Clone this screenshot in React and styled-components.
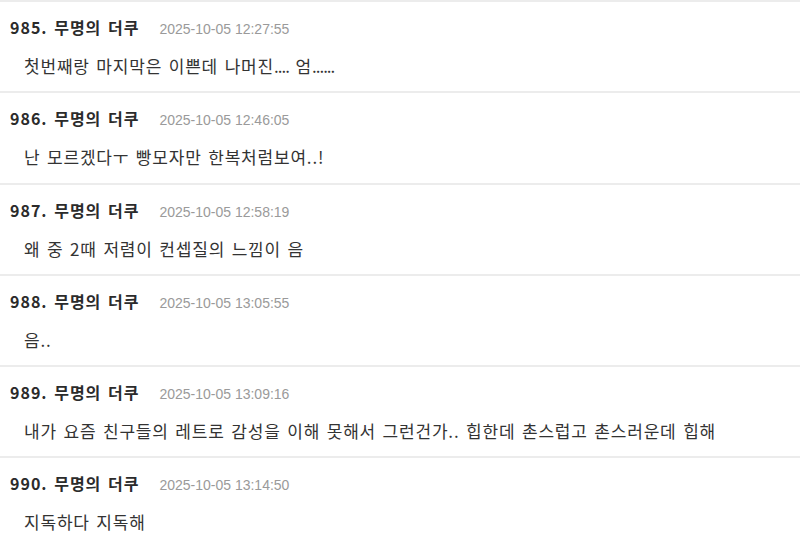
import React from "react";
import styled, { createGlobalStyle } from "styled-components";

const GlobalStyle = createGlobalStyle`
  html, body {
    margin: 0;
    padding: 0;
    background: #ffffff;
  }
  body {
    font-family: "Noto Sans CJK KR", "Noto Sans", sans-serif;
  }
`;

const comments = [
  { no: 985, time: "2025-10-05 12:27:55", text: "첫번째랑 마지막은 이쁜데 나머진.... 엄......" },
  { no: 986, time: "2025-10-05 12:46:05", text: "난 모르겠다ㅜ 빵모자만 한복처럼보여..!" },
  { no: 987, time: "2025-10-05 12:58:19", text: "왜 중 2때 저렴이 컨셉질의 느낌이 음" },
  { no: 988, time: "2025-10-05 13:05:55", text: "음.." },
  {
    no: 989,
    time: "2025-10-05 13:09:16",
    text: "내가 요즘 친구들의 레트로 감성을 이해 못해서 그런건가.. 힙한데 촌스럽고 촌스러운데 힙해",
  },
  { no: 990, time: "2025-10-05 13:14:50", text: "지독하다 지독해" },
];

const List = styled.ul`
  list-style: none;
  margin: 0;
  padding: 0;
  width: 800px;
`;

const Row = styled.li`
  box-sizing: border-box;
  height: 91.3px;
  border-top: 2px solid #ececec;
  padding: 15px 0 0 10px;
`;

const Header = styled.div`
  display: flex;
  align-items: baseline;
  gap: 20px;
  line-height: 20px;
`;

const Author = styled.span`
  font-size: 16px;
  font-weight: 600;
  color: #2b2b2b;
  letter-spacing: 1px;
  word-spacing: 2px;
`;

const Time = styled.span`
  font-family: "Liberation Sans", Arial, sans-serif;
  font-size: 14px;
  color: #9a9a9a;
`;

const Body = styled.p`
  margin: 16px 0 0 14px;
  font-size: 17px;
  line-height: 22px;
  color: #333333;
  letter-spacing: 0.8px;
  word-spacing: 2px;
`;

const Dots = styled.span`
  letter-spacing: -1px;
`;

const renderText = (text) =>
  text.split(/(\.{3,})/).map((part, i) =>
    /^\.{3,}$/.test(part) ? <Dots key={i}>{part}</Dots> : part
  );

export default function App() {
  return (
    <>
      <GlobalStyle />
      <List>
        {comments.map((c) => (
          <Row key={c.no}>
            <Header>
              <Author>{c.no}. 무명의 더쿠</Author>
              <Time>{c.time}</Time>
            </Header>
            <Body>{renderText(c.text)}</Body>
          </Row>
        ))}
      </List>
    </>
  );
}
